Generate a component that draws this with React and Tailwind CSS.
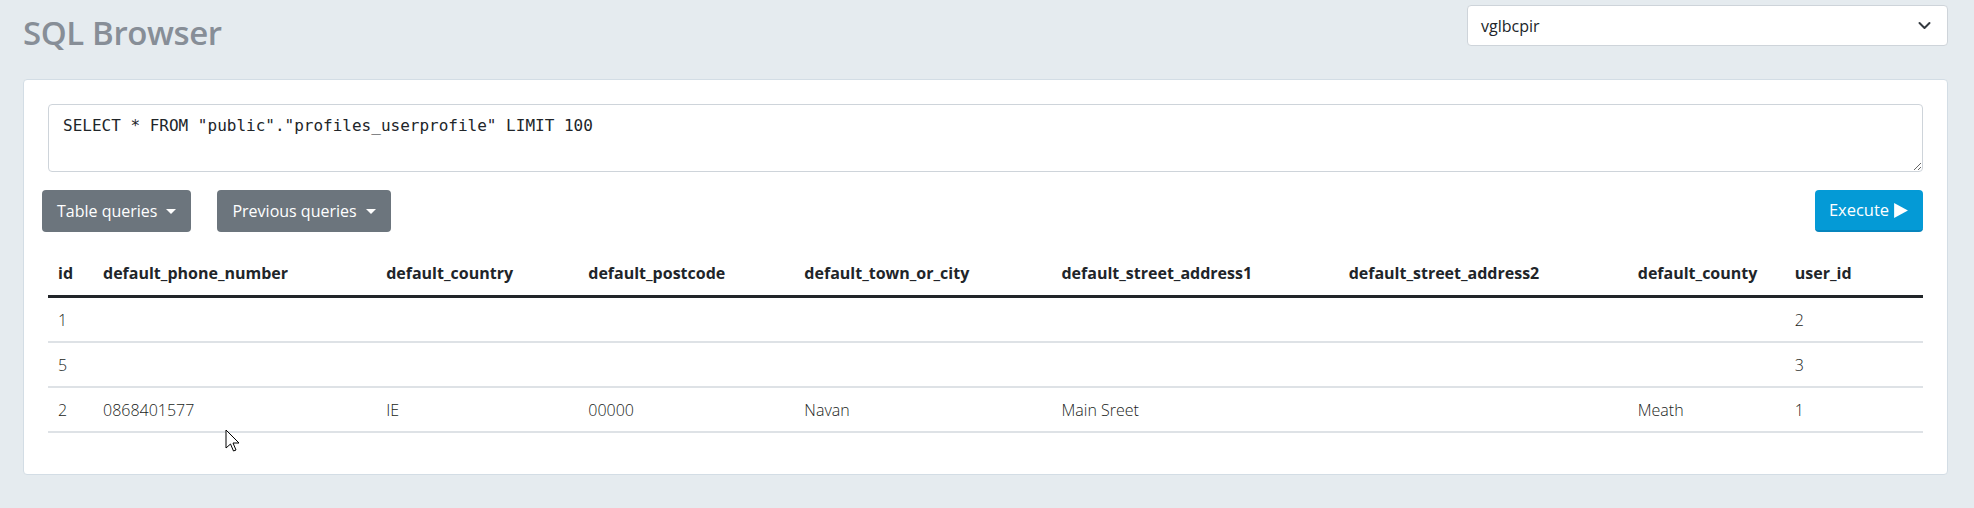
import React from 'react'

const columns = [
  { key: 'id', w: 'w-[45px]' },
  { key: 'default_phone_number', w: 'w-[283px]' },
  { key: 'default_country', w: 'w-[202px]' },
  { key: 'default_postcode', w: 'w-[216px]' },
  { key: 'default_town_or_city', w: 'w-[257px]' },
  { key: 'default_street_address1', w: 'w-[287px]' },
  { key: 'default_street_address2', w: 'w-[289px]' },
  { key: 'default_county', w: 'w-[157px]' },
  { key: 'user_id', w: 'w-[138px]' },
]

const rows = [
  ['1', '', '', '', '', '', '', '', '2'],
  ['5', '', '', '', '', '', '', '', '3'],
  ['2', '0868401577', 'IE', '00000', 'Navan', 'Main Sreet', '', 'Meath', '1'],
]

function Caret() {
  return <span className="ml-[9px] inline-block h-0 w-0 border-x-[5px] border-t-[5px] border-x-transparent border-t-white align-[3px]" />
}

export default function App() {
  return (
    <div className="relative min-h-[508px] bg-[#e5ebef] pl-[23px] pr-[26px] pt-[5px] pb-[35px] font-['Open_Sans',sans-serif] text-[16px] text-[#212529]">
      {/* header */}
      <div className="flex items-start justify-between">
        <h1 className="mt-[8px] text-[33px] font-semibold leading-[40px] tracking-[-0.4px] text-[#878e97]">SQL Browser</h1>
        <div className="flex h-[41px] w-[481px] items-center justify-between rounded-[4px] border border-[#ced4da] bg-white pl-[13px] pr-[16px]">
          <span>vglbcpir</span>
          <svg width="13" height="9" viewBox="0 0 13 9" fill="none">
            <path d="M1.5 2 L6.5 7 L11.5 2" stroke="#343a40" strokeWidth="2" strokeLinecap="round" strokeLinejoin="round" />
          </svg>
        </div>
      </div>

      {/* card */}
      <div className="mt-[26px] rounded-[4px] border border-[#d3dde5] bg-white p-6 pb-[25px]">
        <textarea
          defaultValue={'SELECT * FROM "public"."profiles_userprofile" LIMIT 100'}
          className="block h-[68px] w-full rounded-[4px] border border-[#ced4da] px-[14px] pt-[9px] font-['DejaVu_Sans_Mono',monospace] text-[16px] leading-[24px] text-[#212529] outline-none"
        />

        <div className="mt-[18px] flex items-center justify-between">
          <div className="-ml-[6px] flex gap-[26px]">
            <button className="flex h-[42px] items-center rounded-[4px] bg-[#6c757d] pl-[15px] pr-[15px] text-white">
              Table queries
              <Caret />
            </button>
            <button className="flex h-[42px] items-center rounded-[4px] bg-[#6c757d] pl-[15px] pr-[15px] text-white">
              Previous queries
              <Caret />
            </button>
          </div>
          <button className="flex h-[42px] w-[108px] items-center justify-center gap-[3px] rounded-[4px] border-b-2 border-[#0785bd] bg-[#049ad6] text-[16.5px] text-white">
            Execute
            <svg width="17" height="17" viewBox="0 0 16 16">
              <path d="M2 1 L15 8 L2 15 Z" fill="white" />
            </svg>
          </button>
        </div>

        <table className="mt-[19px] mb-4 w-full table-fixed border-collapse">
          <colgroup>
            {columns.map((c) => (
              <col key={c.key} className={c.w} />
            ))}
          </colgroup>
          <thead>
            <tr className="border-b-[3px] border-[#212529]">
              {columns.map((c) => (
                <th key={c.key} className="px-[10px] py-[10px] text-left font-bold leading-[24px]">
                  {c.key}
                </th>
              ))}
            </tr>
          </thead>
          <tbody>
            {rows.map((r, i) => (
              <tr key={i} className="border-b-2 border-[#dee2e6]">
                {r.map((v, j) => (
                  <td key={j} className="px-[10px] pt-[10px] pb-[9px] font-light leading-[24px] text-[#1a1d21]">
                    {v}
                  </td>
                ))}
              </tr>
            ))}
          </tbody>
        </table>
      </div>

      {/* mouse pointer */}
      <svg className="absolute left-[225px] top-[429px]" width="17" height="26" viewBox="0 0 17 26">
        <path d="M1 1 L1 19 L5.5 15 L8.5 22 L11 21 L8 14 L14 14 Z" fill="white" stroke="black" strokeWidth="1" strokeLinejoin="round" />
      </svg>
    </div>
  )
}
